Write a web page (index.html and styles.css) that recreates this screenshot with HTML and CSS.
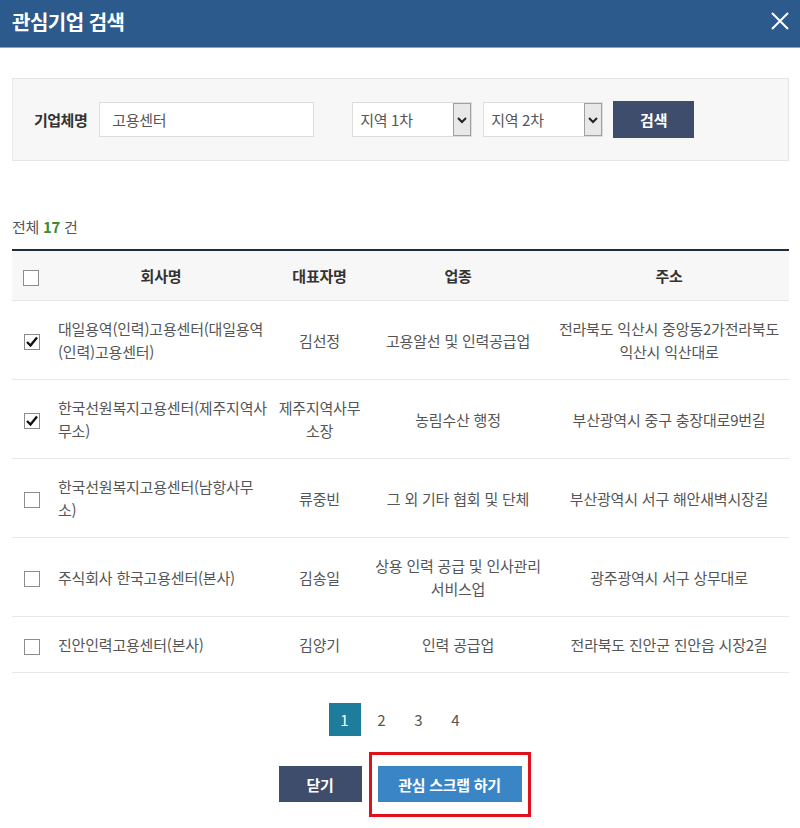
FILE: index.html
```html
<!DOCTYPE html>
<html lang="ko">
<head>
<meta charset="UTF-8">
<meta name="viewport" content="width=device-width, initial-scale=1.0">
<title>관심기업 검색</title>
<link rel="stylesheet" href="styles.css">
</head>
<body>
<div class="popup">
  <div class="popup-head">
    <h1 class="popup-title">관심기업 검색</h1>
    <span class="popup-close">
      <svg width="20" height="20" viewBox="0 0 20 20"><path d="M2 2 L18 18 M18 2 L2 18" stroke="#fff" stroke-width="2" fill="none"/></svg>
    </span>
  </div>

  <div class="popup-body">
    <div class="search-box">
      <span class="search-label">기업체명</span>
      <div class="search-input">고용센터</div>
      <div class="select first">
        <span class="select-text">지역 1차</span>
        <span class="select-arrow"><svg width="10" height="8" viewBox="0 0 10 8"><path d="M1 2 L5 6 L9 2" stroke="#222" stroke-width="2" fill="none"/></svg></span>
      </div>
      <div class="select">
        <span class="select-text">지역 2차</span>
        <span class="select-arrow"><svg width="10" height="8" viewBox="0 0 10 8"><path d="M1 2 L5 6 L9 2" stroke="#222" stroke-width="2" fill="none"/></svg></span>
      </div>
      <button class="btn-search">검색</button>
    </div>

    <p class="total">전체 <strong>17</strong> 건</p>

    <table class="list">
      <colgroup>
        <col class="c-check">
        <col class="c-name">
        <col class="c-ceo">
        <col class="c-type">
        <col class="c-addr">
      </colgroup>
      <thead>
        <tr>
          <th><span class="chk"></span></th>
          <th>회사명</th>
          <th>대표자명</th>
          <th>업종</th>
          <th>주소</th>
        </tr>
      </thead>
      <tbody>
        <tr>
          <td><span class="chk on"><svg width="14" height="14" viewBox="0 0 14 14"><path d="M2 7 L5.5 10.5 L12 2.5" stroke="#111" stroke-width="2.4" fill="none"/></svg></span></td>
          <td class="name">대일용역(인력)고용센터(대일용역(인력)고용센터)</td>
          <td>김선정</td>
          <td>고용알선 및 인력공급업</td>
          <td>전라북도 익산시 중앙동2가전라북도 익산시 익산대로</td>
        </tr>
        <tr>
          <td><span class="chk on"><svg width="14" height="14" viewBox="0 0 14 14"><path d="M2 7 L5.5 10.5 L12 2.5" stroke="#111" stroke-width="2.4" fill="none"/></svg></span></td>
          <td class="name">한국선원복지고용센터(제주지역사무소)</td>
          <td>제주지역사무소장</td>
          <td>농림수산 행정</td>
          <td>부산광역시 중구 충장대로9번길</td>
        </tr>
        <tr>
          <td><span class="chk"></span></td>
          <td class="name">한국선원복지고용센터(남항사무소)</td>
          <td>류중빈</td>
          <td>그 외 기타 협회 및 단체</td>
          <td>부산광역시 서구 해안새벽시장길</td>
        </tr>
        <tr>
          <td><span class="chk"></span></td>
          <td class="name">주식회사 한국고용센터(본사)</td>
          <td>김송일</td>
          <td>상용 인력 공급 및 인사관리 서비스업</td>
          <td>광주광역시 서구 상무대로</td>
        </tr>
        <tr>
          <td><span class="chk"></span></td>
          <td class="name">진안인력고용센터(본사)</td>
          <td>김양기</td>
          <td>인력 공급업</td>
          <td>전라북도 진안군 진안읍 시장2길</td>
        </tr>
      </tbody>
    </table>

    <div class="paging">
      <a class="page on">1</a>
      <a class="page">2</a>
      <a class="page">3</a>
      <a class="page">4</a>
    </div>

    <div class="actions">
      <button class="btn btn-close">닫기</button>
      <span class="scrap-wrap">
        <button class="btn btn-scrap">관심 스크랩 하기</button>
      </span>
    </div>
  </div>
</div>
</body>
</html>
```

FILE: styles.css
```css
body {
  margin: 0;
  font-family: 'Noto Sans CJK KR', 'Noto Sans', sans-serif;
  font-size: 15px;
  color: #555;
  background-color: #fff;
}
.popup {
  width: 800px;
}
.popup-head {
  height: 47px;
  background-color: #2c5a8d;
  display: flex;
  align-items: center;
  justify-content: space-between;
  padding: 0 10px 0 12px;
  border-bottom: 1px solid #8aa3c0;
}
.popup-title {
  margin: 0;
  font-size: 20px;
  font-weight: bold;
  color: #fff;
  letter-spacing: -0.5px;
  padding-bottom: 4px;
}
.popup-close {
  display: flex;
  padding-bottom: 6px;
}
.popup-body {
  padding: 30px 11px 24px 12px;
}
.search-box {
  display: flex;
  align-items: center;
  height: 81px;
  padding-left: 21px;
  background-color: #f7f7f7;
  border: 1px solid #e6e6e6;
}
.search-label {
  font-weight: bold;
  color: #333;
  letter-spacing: -0.5px;
  margin-right: 12px;
}
.search-input {
  box-sizing: border-box;
  width: 215px;
  height: 35px;
  line-height: 33px;
  padding-left: 12px;
  background-color: #fff;
  border: 1px solid #ddd;
  letter-spacing: -0.3px;
}
.select {
  box-sizing: border-box;
  width: 120px;
  height: 35px;
  display: flex;
  justify-content: space-between;
  background-color: #fff;
  border: 1px solid #ddd;
  margin-left: 11px;
}
.select.first {
  margin-left: 38px;
}
.select-text {
  line-height: 33px;
  padding-left: 7px;
  letter-spacing: -0.3px;
}
.select-arrow {
  box-sizing: border-box;
  width: 18px;
  display: flex;
  align-items: center;
  justify-content: center;
  background-color: #e8e8e8;
  border: 1px solid #a0a0a0;
}
.btn-search {
  width: 81px;
  height: 37px;
  margin-left: 10px;
  border: none;
  background-color: #3f4d6c;
  color: #fff;
  font-family: inherit;
  font-size: 15px;
  font-weight: bold;
}
.total {
  margin: 56px 0 12px;
  line-height: 20px;
  letter-spacing: -0.3px;
}
.total strong {
  color: #3d8b2e;
}
.list {
  width: 777px;
  table-layout: fixed;
  border-collapse: collapse;
  border-top: 2px solid #1f2d3d;
  letter-spacing: -0.2px;
}
.c-check { width: 38px; }
.c-name { width: 222px; }
.c-ceo { width: 95px; }
.c-type { width: 182px; }
.c-addr { width: 240px; }
.list th {
  height: 49px;
  background-color: #f7f7f7;
  color: #333;
  font-weight: bold;
  border-bottom: 1px solid #e6e6e6;
  padding: 0;
}
.list td {
  text-align: center;
  line-height: 23px;
  padding: 16px 4px;
  border-bottom: 1px solid #e8e8e8;
}
.list td:first-child {
  padding: 0 0 0 2px;
}
.list td.name {
  text-align: left;
  padding: 16px 2px 16px 8px;
}
.list td:nth-child(4) {
  padding: 16px 8px;
}
.list td:nth-child(5) {
  padding: 16px 2px;
}
.chk {
  box-sizing: border-box;
  display: inline-flex;
  align-items: center;
  justify-content: center;
  width: 16px;
  height: 16px;
  border: 1px solid #8c8c8c;
  background-color: #fff;
  vertical-align: middle;
}
.paging {
  display: flex;
  justify-content: center;
  gap: 5px;
  margin-top: 30px;
  padding-right: 1px;
}
.page {
  width: 32px;
  height: 33px;
  line-height: 33px;
  text-align: center;
  color: #555;
}
.page.on {
  background-color: #1e7d9d;
  color: #fff;
}
.actions {
  display: flex;
  justify-content: center;
  gap: 16px;
  margin-top: 30px;
  padding-right: 1px;
}
.btn {
  display: block;
  height: 36px;
  border: none;
  color: #fff;
  font-family: inherit;
  font-size: 15px;
  font-weight: bold;
  letter-spacing: -0.3px;
}
.btn-close {
  width: 83px;
  background-color: #3f4d6c;
}
.scrap-wrap {
  position: relative;
  display: block;
}
.scrap-wrap::after {
  content: '';
  position: absolute;
  left: -9px;
  right: -9px;
  top: -14px;
  bottom: -15px;
  border: 3px solid #e0111c;
}
.btn-scrap {
  width: 144px;
  background-color: #3a85c5;
}
```
